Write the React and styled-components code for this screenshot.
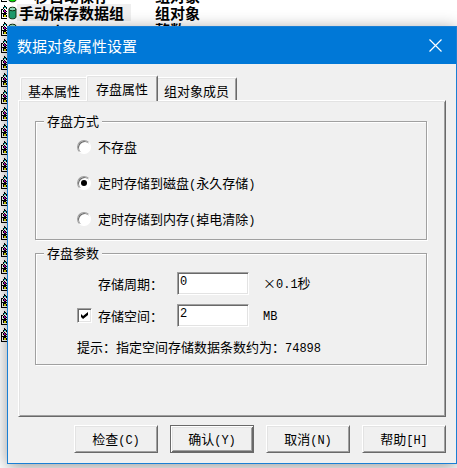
import React, { useState } from 'react';
import styled, { createGlobalStyle, css } from 'styled-components';

const GlobalStyle = createGlobalStyle`
	* {
		box-sizing: border-box;
	}

	body {
		margin: 0;
		background: #fff;
		color: #000;
		font-family: "Noto Sans CJK SC", sans-serif;
		font-size: 13px;
		line-height: 14px;
	}
`;

const raised = css`
	border: 1px solid;
	border-color: #fff #696969 #696969 #fff;
	box-shadow: inset 1px 1px 0 #e3e3e3, inset -1px -1px 0 #a0a0a0;
`;

const Desktop = styled.main`
	position: relative;
	min-height: 100vh;
	overflow: hidden;
`;

/* object list behind the dialog, scrolled part way through a row */
const ObjectList = styled.ul`
	position: absolute;
	top: -13px;
	left: 0;
	right: 0;
	margin: 0;
	padding: 0;
	list-style: none;
	font-size: 15px;
	font-weight: 700;
	line-height: 17px;
`;

const ObjectRow = styled.li`
	display: grid;
	grid-template-columns: 17px 138px auto;
	height: 17px;
	white-space: nowrap;

	svg {
		display: block;
	}
`;

const ObjectName = styled.span`
	justify-self: start;
	padding: 0 7px 0 2px;
	background: ${({ $selected }) => ($selected ? '#efefef' : 'none')};
`;

const Dialog = styled.section`
	position: absolute;
	top: 26px;
	left: 7px;
	right: 0;
	border: 1px solid #1a7fd4;
	background: #f0f0f0;
	box-shadow: 0 3px 16px rgba(0, 0, 0, 0.4);
`;

const TitleBar = styled.header`
	display: flex;
	align-items: center;
	justify-content: space-between;
	height: 37px;
	padding: 0 14px 0 9px;
	background: #0078d7;
	color: #fff;

	h1 {
		margin: 0;
		font-size: 15px;
		font-weight: 400;
		line-height: 20px;
	}
`;

const CloseButton = styled.button`
	padding: 0;
	border: 0;
	background: none;
	color: #fff;

	svg {
		display: block;
	}
`;

const Body = styled.div`
	padding: 11px 10px 10px;
`;

const TabList = styled.div`
	display: flex;
	align-items: flex-end;
	padding-left: 2px;
`;

const Tab = styled.button`
	height: 23px;
	padding: 3px 7px 0;
	border: 1px solid;
	border-color: #fff #696969 transparent #fff;
	border-bottom: 0;
	border-radius: 2px 2px 0 0;
	background: #f0f0f0;
	box-shadow: inset 1px 1px 0 #e3e3e3, inset -1px 0 0 #a0a0a0;
	color: #000;
	font: inherit;
	white-space: nowrap;

	&[aria-selected="true"] {
		position: relative;
		z-index: 1;
		height: 26px;
		margin: 0 -2px -1px;
		padding: 0 9px;
	}
`;

const Panel = styled.div`
	${raised}
	padding: 13px 18px 51px 16px;
`;

const Group = styled.fieldset`
	min-width: 0;
	margin: 0;
	padding: 12px 8px 13px 41px;
	border: 1px solid #a0a0a0;
	box-shadow: 1px 1px 0 #fff, inset 1px 1px 0 #fff;

	& + & {
		margin-top: 6px;
		padding-bottom: 10px;
	}

	legend {
		margin-left: -33px;
		padding: 0 3px;
		background: #f0f0f0;
	}
`;

const RadioList = styled.div`
	display: grid;
	gap: 22px;
`;

const RadioRow = styled.label`
	display: flex;
	align-items: center;
	gap: 7px;
	height: 14px;
`;

const Radio = styled.input`
	appearance: none;
	display: grid;
	place-items: center;
	width: 14px;
	height: 14px;
	margin: 0;
	border: 1px solid;
	border-color: #a0a0a0 #fff #fff #a0a0a0;
	border-radius: 50%;
	background: #fff;
	box-shadow: inset 1px 1px 0 #696969;

	&:checked::before {
		content: "";
		width: 6px;
		height: 6px;
		border-radius: 50%;
		background: #000;
	}
`;

const ParamList = styled.div`
	display: grid;
	gap: 9px;
`;

const ParamRow = styled.div`
	display: grid;
	grid-template-columns: 21px 79px 72px auto;
	align-items: center;
	height: 23px;
	white-space: nowrap;
`;

const Checkbox = styled.input`
	appearance: none;
	display: grid;
	place-items: center;
	width: 15px;
	height: 15px;
	margin: 0;
	border: 1px solid;
	border-color: #a0a0a0 #fff #fff #a0a0a0;
	background: #fff;
	box-shadow: inset 1px 1px 0 #696969, inset -1px -1px 0 #e3e3e3;

	&:checked::before {
		content: "";
		width: 7px;
		height: 7px;
		background: #000;
		clip-path: polygon(0 29%, 29% 57%, 100% 0, 100% 43%, 29% 100%, 0 71%);
	}
`;

const TextBox = styled.input`
	width: 100%;
	height: 23px;
	padding: 0 2px 3px;
	border: 1px solid;
	border-color: #a0a0a0 #fff #fff #a0a0a0;
	border-radius: 0;
	outline: 0;
	background: #fff;
	box-shadow: inset 1px 1px 0 #696969, inset -1px -1px 0 #e3e3e3;
	color: #000;
	font-family: "Liberation Mono", monospace;
	font-size: 12px;
`;

const Unit = styled.span`
	padding-left: 14px;
`;

const Times = styled.span`
	display: inline-block;
	width: 13px;
	text-align: center;
`;

const Latin = styled.span`
	font-family: "Liberation Mono", monospace;
	font-size: 12px;
	line-height: 1;
`;

const Hint = styled.p`
	height: 14px;
	margin: 4px 0 0;
	white-space: nowrap;
`;

const Actions = styled.footer`
	display: flex;
	justify-content: flex-end;
	gap: 12px;
	margin-top: 8px;
`;

const ActionButton = styled.button`
	${raised}
	width: 84px;
	height: 28px;
	padding: 0;
	background: #f0f0f0;
	color: #000;
	font: inherit;

	${({ $primary }) => $primary && css`
		border-color: #696969;
		box-shadow: inset 1px 1px 0 #fff, inset -1px -1px 0 #696969,
			inset 2px 2px 0 #e3e3e3, inset -2px -2px 0 #a0a0a0;
	`}
`;

const ObjectIcon = ({ color }) => (
	<svg width="17" height="17" viewBox="0 0 17 17" shapeRendering="crispEdges" aria-hidden="true">
		<path d="M2 5h5v10h-5z" fill="#fff" />
		<path d="M4 1h1v1h1v1h1v2h-1v-1h-2v1h-1v-2h1z" fill="#000" />
		<path d="M4 3h2v1h-2z" fill="#00c0c0" />
		<path d="M1 5h2v1h-1v3h1v1h-1v4h5v1h-6z" fill="#000" />
		<path d="M4 5h1v1h1v1h1v1h-1v1h-2v-1h-1v-2h1z" fill="#000" />
		<path d="M4 6h1v1h1v1h-2z" fill="#c000c0" />
		<path d="M3 9h4v1h-1v1h1v2h-1v-1h-2v1h-1z" fill="#000" />
		<path d="M4 11h2v2h-2z" fill="#e0e000" />
		{color && (
			<g shapeRendering="auto">
				<path d="M9 5v8c0 2.4 7 2.4 7 0v-8z" fill={color} stroke="#103010" />
				<ellipse cx="12.5" cy="5" rx="3.5" ry="1.8" fill="#8fd8b8" stroke="#103010" />
			</g>
		)}
	</svg>
);

const OBJECTS = [
	{ name: '一秒自动保存', type: '组对象', color: '#00e000' },
	{ name: '手动保存数据组', type: '组对象', color: '#1f9a6c', selected: true },
	{ name: 'counter', type: '整数', color: '#00e000' },
	...Array.from({ length: 18 }, () => ({})),
];

const TABS = ['基本属性', '存盘属性', '组对象成员'];

const SAVE_MODES = [
	{ name: '不存盘' },
	{ name: '定时存储到磁盘', note: '永久存储' },
	{ name: '定时存储到内存', note: '掉电清除' },
];

const App = () => {
	const [tab, setTab] = useState(1);
	const [mode, setMode] = useState(1);

	return (
		<Desktop lang="zh-CN">
			<GlobalStyle />
			<ObjectList>
				{OBJECTS.map((object, i) => (
					<ObjectRow key={i}>
						<ObjectIcon color={object.color} />
						{object.name && <ObjectName $selected={object.selected}>{object.name}</ObjectName>}
						{object.type && <span>{object.type}</span>}
					</ObjectRow>
				))}
			</ObjectList>

			<Dialog role="dialog" aria-labelledby="dialog-title">
				<TitleBar>
					<h1 id="dialog-title">数据对象属性设置</h1>
					<CloseButton type="button" aria-label="关闭">
						<svg width="13" height="13" viewBox="0 0 13 13" fill="none" stroke="currentColor" strokeWidth="1.2">
							<path d="M.5.5l12 12M12.5.5l-12 12" />
						</svg>
					</CloseButton>
				</TitleBar>

				<Body>
					<TabList role="tablist">
						{TABS.map((name, i) => (
							<Tab key={name} type="button" role="tab" aria-selected={tab === i} onClick={() => setTab(i)}>
								{name}
							</Tab>
						))}
					</TabList>

					<Panel role="tabpanel">
						<Group>
							<legend>存盘方式</legend>
							<RadioList>
								{SAVE_MODES.map(({ name, note }, i) => (
									<RadioRow key={name}>
										<Radio type="radio" name="mode" checked={mode === i} onChange={() => setMode(i)} />
										<span>
											{name}
											{note && <><Latin>(</Latin>{note}<Latin>)</Latin></>}
										</span>
									</RadioRow>
								))}
							</RadioList>
						</Group>

						<Group>
							<legend>存盘参数</legend>
							<ParamList>
								<ParamRow>
									<span />
									<label htmlFor="period">存储周期：</label>
									<TextBox id="period" defaultValue="0" />
									<Unit><Times>×</Times><Latin>0.1</Latin>秒</Unit>
								</ParamRow>
								<ParamRow>
									<Checkbox id="limit" type="checkbox" defaultChecked />
									<label htmlFor="limit">存储空间：</label>
									<TextBox aria-label="存储空间" defaultValue="2" />
									<Unit><Latin>MB</Latin></Unit>
								</ParamRow>
								<Hint>提示：指定空间存储数据条数约为：<Latin>74898</Latin></Hint>
							</ParamList>
						</Group>
					</Panel>

					<Actions>
						<ActionButton type="button">检查<Latin>(C)</Latin></ActionButton>
						<ActionButton type="button" $primary>确认<Latin>(Y)</Latin></ActionButton>
						<ActionButton type="button">取消<Latin>(N)</Latin></ActionButton>
						<ActionButton type="button">帮助<Latin>[H]</Latin></ActionButton>
					</Actions>
				</Body>
			</Dialog>
		</Desktop>
	);
};

export default App;
